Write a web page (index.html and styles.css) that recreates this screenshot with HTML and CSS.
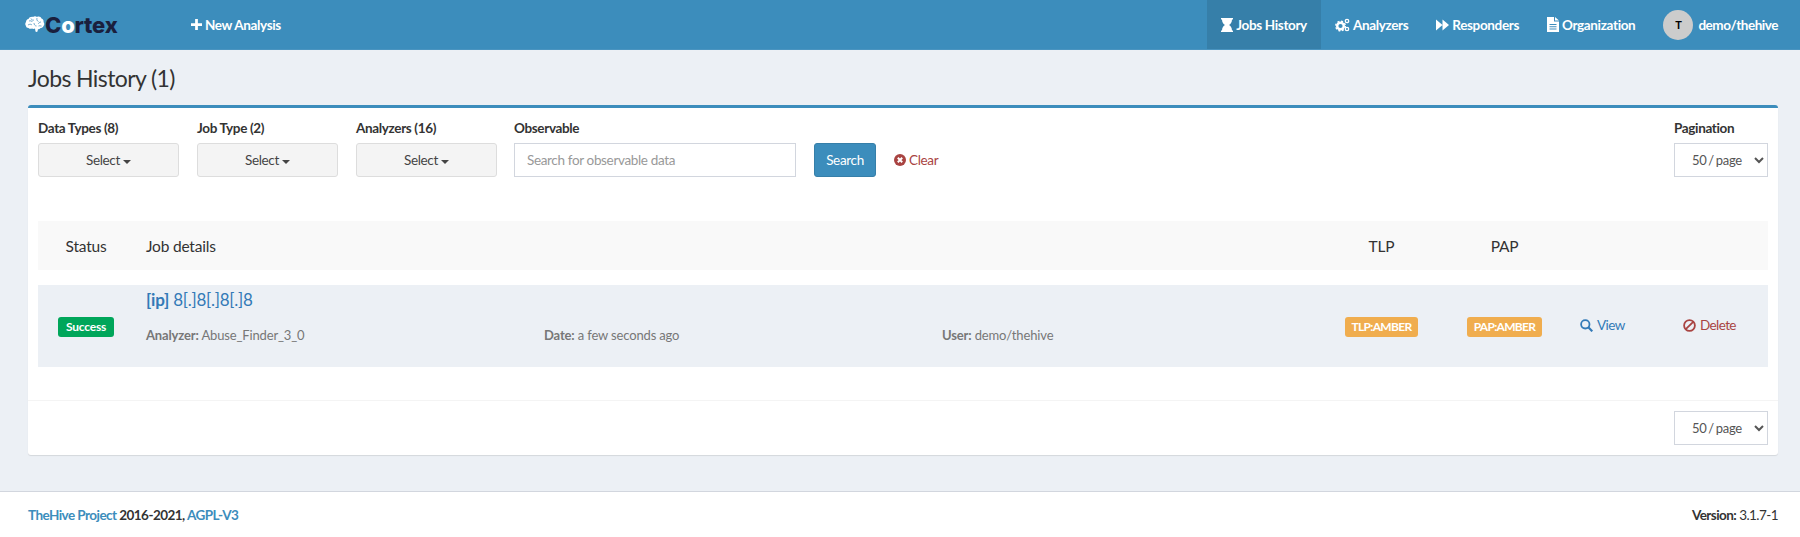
FILE: index.html
```html
<!DOCTYPE html>
<html>

<head>
  <meta charset="UTF-8">
  <title>Cortex - Jobs History</title>
  <link rel="stylesheet" href="styles.css">
</head>

<body>

  <header class="topbar">
    <a class="logo">
      <svg class="logo-brain" viewBox="0 0 20 17" width="20" height="17">
        <path fill="#fff" d="M8 1c1-1 3-1 4 0 2-1 4 0 4.500 1.500C18 3 19 4.500 18.500 6c1 1 1 3 0 4-.5 1.500-2 2-3 2-.5 1-1.500 1.500-2.500 1l-.5 2.500c-.5.5-1.500.5-2 0L10 12.500c-1 .5-2 .5-3 0-1 .5-2.500.5-3.500-.5C2 12 1 11 1 10c-1-1-1-3 0-4 0-1.500 1-3 2.500-3C4 1.500 6.500.5 8 1z"/>
        <path fill="none" stroke="#3c8dbc" stroke-width=".7" d="M4 5c1.500-.5 3 0 3.500 1M6 2.500C6.500 4 8 4.500 9 4M12 2c-.5 1.500 0 3 1.500 3.500M16 6c-1.500 0-2.500 1-2.500 2M3 9c1.500-1 3-1 4 0M9 7c0 1.500 1 3 2.500 3M16.500 10c-1 0-2-.5-3 0"/>
      </svg>
      <span class="logo-text">C<span class="logo-o">o</span>rtex</span>
    </a>
    <a class="nav-link new-analysis">
      <svg class="icon" viewBox="0 0 12 12" width="11" height="11"><path fill="#fff" d="M4.500 0h3v4.500H12v3H7.500V12h-3V7.500H0v-3h4.500z"/></svg>
      New Analysis
    </a>
    <nav class="nav-right">
      <a class="nav-link active">
        <svg class="icon" viewBox="0 0 12 14" width="12" height="14"><path fill="#fff" d="M0 0h12v1.500h-1c0 3-1.500 4.500-3 5.500 1.500 1 3 2.500 3 5.500h1V14H0v-1.500h1C1 9.500 2.500 8 4 7 2.500 6 1 4.500 1 1.500H0z"/></svg>
        Jobs History
      </a>
      <a class="nav-link">
        <svg class="icon" viewBox="0 0 15 14" width="15" height="14">
          <circle cx="5.500" cy="8" r="3.300" fill="none" stroke="#fff" stroke-width="2.400"/>
          <circle cx="5.500" cy="8" r="4.800" fill="none" stroke="#fff" stroke-width="1.400" stroke-dasharray="2 1.770"/>
          <circle cx="12" cy="3" r="1.700" fill="none" stroke="#fff" stroke-width="1.300"/>
          <circle cx="12" cy="11" r="1.700" fill="none" stroke="#fff" stroke-width="1.300"/>
        </svg>
        Analyzers
      </a>
      <a class="nav-link">
        <svg class="icon" viewBox="0 0 14 12" width="13" height="12"><path fill="#fff" d="M0 0l7 6-7 6zM7 0l7 6-7 6z"/></svg>
        Responders
      </a>
      <a class="nav-link">
        <svg class="icon" viewBox="0 0 12 15" width="12" height="15"><path fill="#fff" fill-rule="evenodd" d="M0 0h7v4.500h5V15H0zM8 0l4 3.500H8zM2.500 7v1h7V7zm0 2.300v1h7v-1zm0 2.300v1h7v-1z"/></svg>
        Organization
      </a>
      <a class="nav-link user">
        <span class="avatar">T</span>
        demo/thehive
      </a>
    </nav>
  </header>

  <main class="content">
    <h1 class="page-title">Jobs History (1)</h1>

    <section class="box">
      <div class="filters">
        <div class="filter filter-select">
          <label>Data Types (8)</label>
          <button class="btn-select">Select <span class="caret"></span></button>
        </div>
        <div class="filter filter-select">
          <label>Job Type (2)</label>
          <button class="btn-select">Select <span class="caret"></span></button>
        </div>
        <div class="filter filter-select">
          <label>Analyzers (16)</label>
          <button class="btn-select">Select <span class="caret"></span></button>
        </div>
        <div class="filter filter-search">
          <label>Observable</label>
          <input class="search-input" type="text" placeholder="Search for observable data">
        </div>
        <button class="btn-search">Search</button>
        <a class="link-clear">
          <svg class="icon" viewBox="0 0 12 12" width="12" height="12"><circle cx="6" cy="6" r="6" fill="#a94442"/><path stroke="#fff" stroke-width="2" d="M3.800 3.800l4.400 4.400M8.200 3.800L3.800 8.200"/></svg>
          Clear
        </a>
        <div class="filter filter-page">
          <label>Pagination</label>
          <select class="page-select"><option>50 / page</option></select>
        </div>
      </div>

      <div class="job-grid job-head">
        <div class="cell-center">Status</div>
        <div class="cell-details">Job details</div>
        <div class="cell-center">TLP</div>
        <div class="cell-center">PAP</div>
        <div></div>
        <div></div>
      </div>

      <div class="job-grid job-row">
        <div class="cell-center"><span class="tag tag-success">Success</span></div>
        <div class="cell-details">
          <a class="job-title"><b>[ip]</b> 8[.]8[.]8[.]8</a>
          <div class="job-meta">
            <div><b>Analyzer:</b> Abuse_Finder_3_0</div>
            <div><b>Date:</b> a few seconds ago</div>
            <div><b>User:</b> demo/thehive</div>
          </div>
        </div>
        <div class="cell-center"><span class="tag tag-amber">TLP:AMBER</span></div>
        <div class="cell-center"><span class="tag tag-amber">PAP:AMBER</span></div>
        <div class="cell-action">
          <a class="link-view">
            <svg class="icon" viewBox="0 0 13 13" width="13" height="13"><circle cx="5.300" cy="5.300" r="4.200" fill="none" stroke="#337ab7" stroke-width="1.800"/><path stroke="#337ab7" stroke-width="2.200" d="M8.300 8.300l4 4"/></svg>
            View
          </a>
        </div>
        <div class="cell-action">
          <a class="link-delete">
            <svg class="icon" viewBox="0 0 13 13" width="13" height="13"><circle cx="6.500" cy="6.500" r="5.400" fill="none" stroke="#a94442" stroke-width="1.800"/><path stroke="#a94442" stroke-width="1.800" d="M2.800 10.200l7.400-7.400"/></svg>
            Delete
          </a>
        </div>
      </div>

      <div class="box-footer">
        <select class="page-select"><option>50 / page</option></select>
      </div>
    </section>
  </main>

  <footer class="footer">
    <div><a>TheHive Project</a> 2016-2021, <a>AGPL-V3</a></div>
    <div>Version:<span class="version"> 3.1.7-1</span></div>
  </footer>

</body>

</html>
```

FILE: styles.css
```css
* {
  box-sizing: border-box;
}

body {
  font-family: "Lato", "Noto Sans", sans-serif;
  font-size: 13.5px;
  letter-spacing: -0.35px;
  line-height: 20px;
  color: #333;
  background-color: #ecf0f5;
  margin: 0;
  height: 537px;
  overflow: hidden;
  display: flex;
  flex-direction: column;
}

.icon {
  flex: none;
}

/* top bar */
.topbar {
  height: 50px;
  background-color: #3c8dbc;
  border-bottom: 1px solid #4a94c0;
  display: flex;
  align-items: stretch;
  padding-left: 25px;
}

.logo {
  display: flex;
  align-items: center;
  width: 152px;
}

.logo-text {
  font-family: "Inter", sans-serif;
  font-weight: 800;
  font-size: 22px;
  color: #1a1f3d;
  letter-spacing: -0.2px;
}

.logo-o {
  color: #fff;
}

.nav-link {
  display: flex;
  align-items: center;
  gap: 3px;
  padding: 0 14px;
  color: #fff;
  font-weight: 700;
  white-space: nowrap;
}

.nav-right {
  margin-left: auto;
  display: flex;
}

.nav-link.active {
  background-color: #367fa9;
}

.nav-link.user {
  gap: 5px;
  padding-right: 22px;
  letter-spacing: -0.45px;
}

.avatar {
  width: 30px;
  height: 30px;
  border-radius: 50%;
  background-color: #ccc;
  color: #000;
  font-size: 11px;
  display: flex;
  align-items: center;
  justify-content: center;
}

/* page */
.content {
  flex: 1;
  padding: 0 22px 0 28px;
}

.page-title {
  font-size: 23px;
  letter-spacing: -0.6px;
  font-weight: 400;
  line-height: 26px;
  margin: 15px 0 14px;
  color: #333;
}

.box {
  background-color: #fff;
  border-top: 3px solid #3c8dbc;
  border-radius: 3px;
  box-shadow: 0 1px 1px rgba(0, 0, 0, 0.1);
  padding: 0 10px;
  height: 350px;
}

.filters {
  display: flex;
  align-items: flex-end;
  padding-top: 10px;
}

.filter label {
  display: block;
  font-weight: 700;
  margin-bottom: 5px;
}

.filter-select {
  width: 141px;
  margin-right: 18px;
}

.btn-select {
  width: 100%;
  height: 34px;
  font: inherit;
  letter-spacing: inherit;
  color: #444;
  background-color: #f4f4f4;
  border: 1px solid #ddd;
  border-radius: 3px;
}

.caret {
  display: inline-block;
  vertical-align: middle;
  border-top: 4px solid #444;
  border-left: 4px solid transparent;
  border-right: 4px solid transparent;
}

.filter-search {
  width: 282px;
  margin-left: -1px;
  margin-right: 18px;
}

.search-input {
  display: block;
  width: 100%;
  height: 34px;
  font: inherit;
  letter-spacing: inherit;
  padding: 6px 12px;
  color: #555;
  border: 1px solid #d2d6de;
  outline: none;
}

.search-input::placeholder {
  color: #999;
}

.btn-search {
  width: 62px;
  height: 34px;
  font: inherit;
  letter-spacing: inherit;
  color: #fff;
  background-color: #3c8dbc;
  border: 1px solid #367fa9;
  border-radius: 3px;
}

.link-clear {
  height: 34px;
  margin-left: 18px;
  display: flex;
  align-items: center;
  gap: 3px;
  color: #a94442;
}

.filter-page {
  margin-left: auto;
  width: 94px;
}

.page-select {
  display: block;
  width: 94px;
  height: 34px;
  font: inherit;
  font-size: 13px;
  letter-spacing: inherit;
  word-spacing: -1px;
  color: #555;
  background-color: #fff;
  border: 1px solid #d2d6de;
  border-radius: 0;
  padding: 0 0 0 13px;
  outline: none;
}

/* job list */
.job-grid {
  display: grid;
  grid-template-columns: 96px 1186px 123px 123px 101px 102px;
}

.job-head {
  margin-top: 44px;
  height: 49px;
  background-color: #f9f9f9;
  font-size: 15.5px;
  letter-spacing: -0.2px;
  align-items: center;
}

.job-row {
  margin-top: 15px;
  height: 82px;
  background-color: #ecf0f5;
  align-items: center;
}

.cell-center {
  text-align: center;
}

.cell-details {
  padding-left: 12px;
}

.job-row .cell-details {
  align-self: start;
}

.job-title {
  display: block;
  font-size: 17px;
  letter-spacing: -0.25px;
  line-height: 30px;
  color: #337ab7;
}

.job-meta {
  display: grid;
  grid-template-columns: repeat(3, 398px);
  margin-top: 10px;
  font-size: 13px;
  letter-spacing: -0.15px;
  color: #777;
}

.tag {
  display: inline-block;
  padding: 0 7px;
  line-height: 20px;
  font-size: 12px;
  font-weight: 700;
  letter-spacing: -0.7px;
  color: #fff;
  border-radius: 3px;
}

.tag-success {
  letter-spacing: -0.2px;
  padding: 0 8px;
  background-color: #00a65a;
}

.tag-amber {
  background-color: #f0ad4e;
}

.link-view,
.link-delete {
  display: inline-flex;
  align-items: center;
  gap: 4px;
  letter-spacing: -0.6px;
}

.cell-action {
  padding-left: 14px;
}

.cell-action + .cell-action {
  padding-left: 16px;
}

.link-view {
  color: #337ab7;
}

.link-delete {
  color: #a94442;
}

.box-footer {
  margin: 33px -10px 0;
  padding: 10px;
  border-top: 1px solid #f4f4f4;
  display: flex;
  justify-content: flex-end;
}

/* footer */
.footer {
  height: 46px;
  background-color: #fff;
  border-top: 1px solid #d2d6de;
  padding: 0 22px 0 28px;
  display: flex;
  align-items: center;
  justify-content: space-between;
  font-weight: 700;
  letter-spacing: -0.55px;
}

.footer a {
  color: #3c8dbc;
}

.version {
  font-weight: 400;
}
```
